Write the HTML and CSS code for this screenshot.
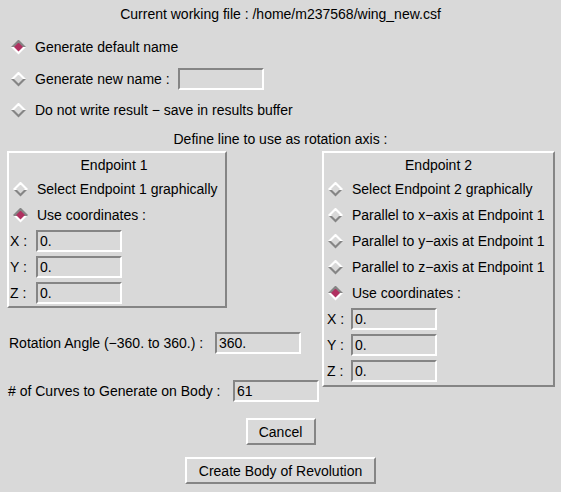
FILE: index.html
```html
<!DOCTYPE html>
<html>
<head>
<meta charset="utf-8">
<link rel="stylesheet" href="styles.css">
</head>
<body>
<div class="dialog">
  <div class="title">Current working file : /home/m237568/wing_new.csf</div>

  <div class="opt opt-first"><span class="dia on"></span><span>Generate default name</span></div>
  <div class="opt"><span class="dia"></span><span>Generate new name :</span><span class="field field-name"></span></div>
  <div class="opt opt-last"><span class="dia"></span><span>Do not write result − save in results buffer</span></div>

  <div class="define">Define line to use as rotation axis :</div>

  <div class="panels">
    <div class="col-left">
      <div class="frame frame1">
        <div class="frame-title">Endpoint 1</div>
        <div class="radio"><span class="dia"></span><span>Select Endpoint 1 graphically</span></div>
        <div class="radio"><span class="dia on"></span><span>Use coordinates :</span></div>
        <div class="coord"><span class="coord-label">X :</span><span class="field">0.</span></div>
        <div class="coord"><span class="coord-label">Y :</span><span class="field">0.</span></div>
        <div class="coord"><span class="coord-label">Z :</span><span class="field">0.</span></div>
      </div>
      <div class="param param-rot"><span class="param-label">Rotation Angle (−360. to 360.) :</span><span class="field">360.</span></div>
      <div class="param param-curves"><span class="param-label"># of Curves to Generate on Body :</span><span class="field">61</span></div>
    </div>

    <div class="frame frame2">
      <div class="frame-title">Endpoint 2</div>
      <div class="radio"><span class="dia"></span><span>Select Endpoint 2 graphically</span></div>
      <div class="radio"><span class="dia"></span><span>Parallel to x−axis at Endpoint 1</span></div>
      <div class="radio"><span class="dia"></span><span>Parallel to y−axis at Endpoint 1</span></div>
      <div class="radio"><span class="dia"></span><span>Parallel to z−axis at Endpoint 1</span></div>
      <div class="radio"><span class="dia on"></span><span>Use coordinates :</span></div>
      <div class="coord"><span class="coord-label">X :</span><span class="field">0.</span></div>
      <div class="coord"><span class="coord-label">Y :</span><span class="field">0.</span></div>
      <div class="coord"><span class="coord-label">Z :</span><span class="field">0.</span></div>
    </div>
  </div>

  <div class="buttons">
    <div class="btn btn-cancel">Cancel</div>
    <div class="btn btn-create">Create Body of Revolution</div>
  </div>
</div>
</body>
</html>
```

FILE: styles.css
```css
html, body {
  margin: 0;
  padding: 0;
  background: #d9d9d9;
}

.dialog {
  width: 561px;
  height: 492px;
  padding-top: 6px;
  box-sizing: border-box;
  font-family: "Liberation Sans", Arial, sans-serif;
  font-size: 14px;
  line-height: 16px;
  color: #000;
  white-space: nowrap;
  overflow: hidden;
}

.title {
  height: 16px;
  text-align: center;
}

.opt {
  display: flex;
  align-items: center;
  height: 22px;
  padding-left: 11px;
  margin-top: 10px;
}
.opt-first { margin-top: 14px; }
.opt-last { margin-top: 9px; }

.dia {
  flex: none;
  width: 15px;
  height: 15px;
  margin-right: 9px;
  display: flex;
  align-items: center;
  justify-content: center;
  clip-path: polygon(50% 0, 100% 50%, 50% 100%, 0 50%);
  background: linear-gradient(#ffffff 50%, #858585 50%);
}
.dia::after {
  content: "";
  width: 9px;
  height: 9px;
  clip-path: polygon(50% 0, 100% 50%, 50% 100%, 0 50%);
  background: #d9d9d9;
}
.dia.on {
  background: linear-gradient(#858585 50%, #ffffff 50%);
}
.dia.on::after {
  background: #b03060;
}

.field {
  flex: none;
  box-sizing: border-box;
  width: 86px;
  height: 22px;
  padding: 1px 2px;
  display: flex;
  align-items: center;
  border-style: solid;
  border-width: 2px;
  border-color: #858585 #ffffff #ffffff #858585;
  background: #d9d9d9;
}
.field-name { margin-left: 8px; }

.define {
  margin-top: 10px;
  height: 16px;
  text-align: center;
}

.panels {
  display: flex;
  align-items: flex-start;
  margin-top: 4px;
  padding-left: 7px;
}

.col-left {
  flex: none;
  width: 312px;
}

.frame {
  box-sizing: border-box;
  display: flex;
  flex-direction: column;
  gap: 4px;
  border-style: solid;
  border-width: 2px;
  border-color: #ffffff #858585 #858585 #ffffff;
  padding-bottom: 2px;
}
.frame1 { width: 220px; }
.frame2 { flex: none; width: 233px; margin-left: 3px; padding-bottom: 3px; }

.frame-title {
  height: 21px;
  padding-top: 4px;
  box-sizing: border-box;
  text-align: center;
}
.frame1 .frame-title { padding-right: 6px; }

.radio {
  display: flex;
  align-items: center;
  height: 22px;
  padding-left: 4px;
}

.coord {
  display: flex;
  align-items: center;
  height: 22px;
}
.coord-label {
  width: 27px;
  padding-left: 1px;
  box-sizing: border-box;
}
.frame2 .coord-label { padding-left: 3px; }

.param {
  display: flex;
  align-items: center;
  height: 22px;
  padding-left: 2px;
}
.param-rot { margin-top: 24px; }
.param-rot .param-label { width: 206px; }
.param-curves { margin-top: 26px; padding-left: 1px; }
.param-curves .param-label { width: 225px; }

.buttons {
  display: flex;
  flex-direction: column;
  align-items: center;
  margin-top: 16px;
}
.btn {
  box-sizing: border-box;
  height: 27px;
  display: flex;
  align-items: center;
  justify-content: center;
  border-style: solid;
  border-width: 2px;
  border-color: #ffffff #858585 #858585 #ffffff;
}
.btn-cancel { width: 70px; }
.btn-create { width: 191px; margin-top: 12px; }
```
